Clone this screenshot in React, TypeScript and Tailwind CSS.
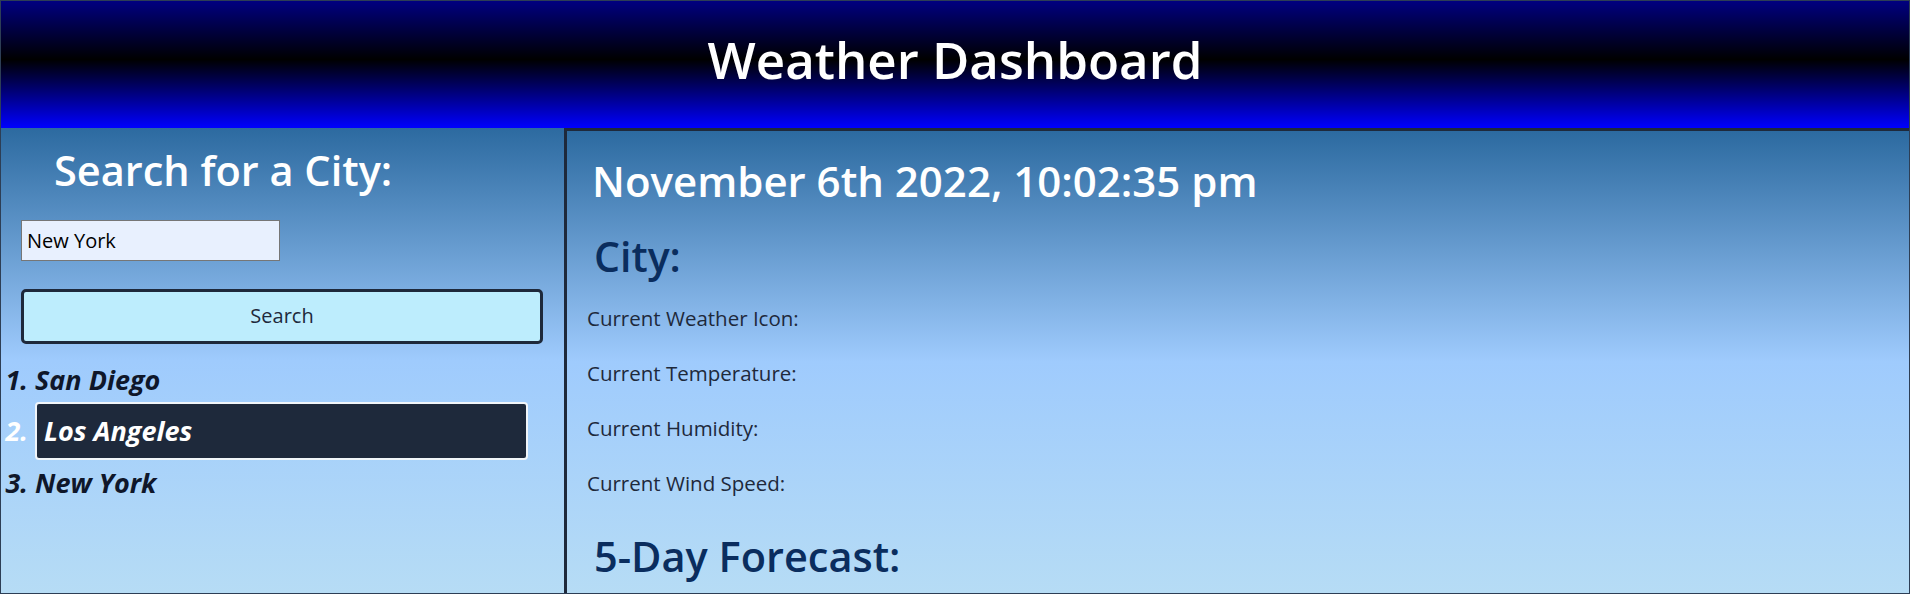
import { memo } from "react";

const cities = [
  { name: "San Diego", active: false },
  { name: "Los Angeles", active: true },
  { name: "New York", active: false },
];

const currentFields = [
  "Current Weather Icon:",
  "Current Temperature:",
  "Current Humidity:",
  "Current Wind Speed:",
];

const panelBg =
  "bg-[linear-gradient(#2c6aa0,#9fcbfd_50%,#b6dcf5)]";

function SearchPanel() {
  return (
    <aside className={`flex w-[563px] shrink-0 flex-col ${panelBg}`}>
      <h2 className="mt-[22px] pl-[53px] text-[41.5px] leading-none font-semibold text-white">
        Search for a City:
      </h2>

      <input
        type="text"
        defaultValue="New York"
        className="mt-[28px] ml-[20px] h-[41px] w-[259px] border border-[#767676] bg-[#e8f0fe] px-[5px] text-[20px] text-black outline-none"
      />

      <button
        type="button"
        className="mt-[28px] ml-[20px] h-[55px] w-[522px] rounded-[5px] border-[3px] border-[#1e293b] bg-[#bdedfd] text-[20px] text-[#1e293b]"
      >
        Search
      </button>

      <ol className="mt-[13px] list-outside list-decimal pr-[36px] pl-[34px] text-[27px] font-bold italic">
        {cities.map((city) =>
          city.active ? (
            <li
              key={city.name}
              className="h-[58px] rounded-[4px] border-2 border-[#f1f5f9] bg-[#1e293b] pl-[7px] leading-[54px] text-white"
            >
              {city.name}
            </li>
          ) : (
            <li key={city.name} className="h-[45px] leading-[45px] text-[#0f172a]">
              {city.name}
            </li>
          ),
        )}
      </ol>
    </aside>
  );
}

function WeatherPanel() {
  return (
    <main
      className={`flex min-w-0 flex-1 flex-col border-t-[3px] border-l-[3px] border-[#1e293b] ${panelBg}`}
    >
      <h1 className="mt-[29px] pl-[25px] text-[42px] leading-none font-semibold text-white">
        November 6th 2022, 10:02:35 pm
      </h1>

      <h2 className="mt-[34px] pl-[27px] text-[41px] leading-none font-semibold text-[#0a2d5e]">
        City:
      </h2>

      <div className="mt-[31px] flex flex-col gap-[34.5px] pl-[20px]">
        {currentFields.map((label) => (
          <p key={label} className="text-[20.5px] leading-none text-[#1e293b]">
            {label}
          </p>
        ))}
      </div>

      <h2 className="mt-[42px] pl-[27px] text-[41.5px] leading-none font-semibold text-[#0a2d5e]">
        5-Day Forecast:
      </h2>
    </main>
  );
}

function App() {
  return (
    <div className="flex h-[594px] w-full flex-col overflow-hidden border border-[#2d3e55] font-['Open_Sans',sans-serif]">
      <header className="flex h-[127px] shrink-0 items-center justify-center bg-[linear-gradient(#000080,#000_46%,#0000ff)] pb-[10px]">
        <h1 className="text-[51px] leading-none font-semibold text-white">
          Weather Dashboard
        </h1>
      </header>

      <div className="flex min-h-0 flex-1">
        <SearchPanel />
        <WeatherPanel />
      </div>
    </div>
  );
}

export default memo(App);
